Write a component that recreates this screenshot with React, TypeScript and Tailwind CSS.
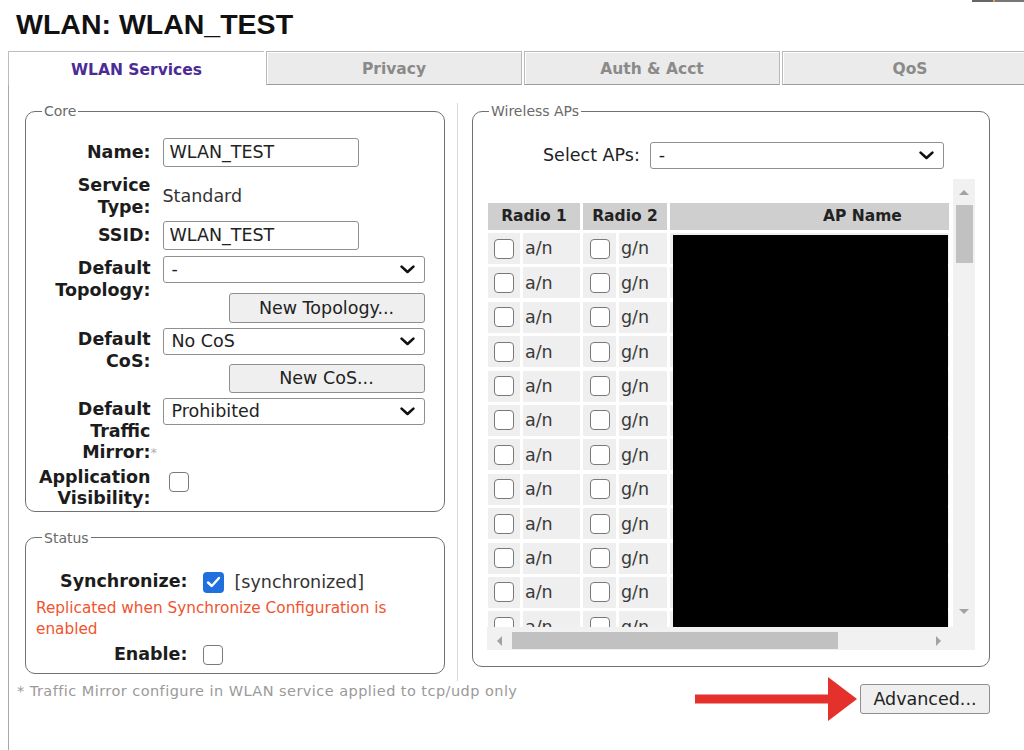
import React from "react";

const Chevron = () => (
  <svg width="15" height="9" viewBox="0 0 15 9" className="shrink-0">
    <path d="M1.6 1.6 L7.5 7 L13.4 1.6" stroke="#111" strokeWidth="2.6" fill="none" strokeLinecap="round" strokeLinejoin="round" />
  </svg>
);

const Box = () => <div className="w-[20px] h-[20px] rounded-[4px] border-[1.5px] border-[#7a7a7a] bg-white shrink-0" />;

const Checked = () => (
  <div className="w-[21px] h-[21px] rounded-[4px] bg-[#1f6fdf] flex items-center justify-center shrink-0">
    <svg width="15" height="12" viewBox="0 0 15 12">
      <path d="M2 6.5 L5.8 10 L13 2" stroke="#fff" strokeWidth="2.4" fill="none" strokeLinecap="round" strokeLinejoin="round" />
    </svg>
  </div>
);

const Lbl = ({ children, className = "" }: { children: React.ReactNode; className?: string }) => (
  <div className={`w-[114.5px] shrink-0 text-right font-bold text-[17.5px] leading-[21.5px] text-[#1c1c1c] ${className}`}>{children}</div>
);

const Input = ({ value }: { value: string }) => (
  <div className="w-[196px] h-[29px] border border-[#8f8f8f] rounded-[3px] flex items-center pl-[6px] text-[17.5px] text-[#222] bg-white">{value}</div>
);

const Select = ({ text, className = "" }: { text: string; className?: string }) => (
  <div className={`h-[27px] border border-[#8f8f8f] rounded-[3px] flex items-center justify-between pl-[8px] pr-[9px] text-[17.5px] text-[#222] bg-white ${className}`}>
    <span>{text}</span>
    <Chevron />
  </div>
);

const Btn = ({ children, className = "" }: { children: React.ReactNode; className?: string }) => (
  <div className={`bg-[#efefef] border border-[#8f8f8f] rounded-[3px] flex items-center justify-center text-[17.5px] text-[#222] ${className}`}>{children}</div>
);

const Tri = ({ dir }: { dir: "up" | "down" | "left" | "right" }) => {
  const pts = {
    up: "0,5 5,0 10,5",
    down: "0,0 10,0 5,5",
    left: "5,0 5,10 0,5",
    right: "0,0 0,10 5,5",
  }[dir];
  const horiz = dir === "left" || dir === "right";
  return (
    <svg width={horiz ? 5 : 10} height={horiz ? 10 : 5} viewBox={horiz ? "0 0 5 10" : "0 0 10 5"}>
      <polygon points={pts} fill="#a3a3a3" />
    </svg>
  );
};

export default function App() {
  const rows = Array.from({ length: 12 });
  return (
    <div className="w-[1024px] h-[750px] overflow-hidden bg-white font-['DejaVu_Sans',sans-serif] text-[#222]">
      <div className="flex justify-end h-[2px]">
        <div className="w-[21px] bg-[#666]" />
        <div className="w-[2px] bg-[#d9a35c]" />
        <div className="w-[29px] bg-[#777]" />
      </div>
      <h1 className="ml-[16px] mt-[7px] font-['Liberation_Sans',Arial,sans-serif] font-bold text-[28.5px] leading-[30px] text-[#111]">
        WLAN: WLAN_TEST
      </h1>

      <div className="mt-[12px] ml-[8px] flex h-[34px]">
        <div className="w-[256px] shrink-0 bg-white border-t border-l border-[#bdbdbd] flex items-center justify-center pt-[4px] text-[15.5px] font-bold text-[#4b2c96]">
          WLAN Services
        </div>
        {["Privacy", "Auth & Acct", "QoS"].map((t) => (
          <div
            key={t}
            className="ml-[2px] w-[256px] shrink-0 bg-[#ebebeb] border border-[#b9b9b9] border-b-[#9c9c9c] shadow-[inset_1px_1px_0_#fff] flex items-center justify-center pt-[4px] text-[15.5px] font-bold text-[#8a8a8a]"
          >
            {t}
          </div>
        ))}
      </div>

      <div className="ml-[8px] border-l border-[#a8a8a8] h-[665px]">
        <div className="flex pt-[18px] pl-[16px]">
          {/* Left column */}
          <div className="w-[420px] shrink-0 pb-[7px]">
            <fieldset className="border-[1.5px] border-[#707070] rounded-[10px] pl-[10px] pr-[16px] pt-[19px] pb-[1px] min-w-0">
              <legend className="ml-[6px] px-[2px] text-[14px] leading-[16px] text-[#6a6a6a]">Core</legend>

              <div className="flex items-center gap-[12px]">
                <Lbl>Name:</Lbl>
                <Input value="WLAN_TEST" />
              </div>

              <div className="mt-[8px] flex items-center gap-[12px]">
                <Lbl>
                  Service
                  <br />
                  Type:
                </Lbl>
                <div className="text-[17.5px] text-[#333]">Standard</div>
              </div>

              <div className="mt-[3px] flex items-center gap-[12px]">
                <Lbl>SSID:</Lbl>
                <Input value="WLAN_TEST" />
              </div>

              <div className="mt-[6px] flex items-start gap-[12px]">
                <Lbl className="mt-[2px]">
                  Default
                  <br />
                  Topology:
                </Lbl>
                <div className="w-[262px] flex flex-col items-end">
                  <Select text="-" className="w-full" />
                  <Btn className="mt-[10px] w-[196px] h-[30px]">New Topology...</Btn>
                </div>
              </div>

              <div className="mt-[5px] flex items-start gap-[12px]">
                <Lbl className="mt-[1px]">
                  Default
                  <br />
                  CoS:
                </Lbl>
                <div className="w-[262px] flex flex-col items-end">
                  <Select text="No CoS" className="w-full" />
                  <Btn className="mt-[9px] w-[196px] h-[29px]">New CoS...</Btn>
                </div>
              </div>

              <div className="mt-[5px] flex items-start gap-[12px]">
                <Lbl className="mt-[1px]">
                  Default
                  <br />
                  Traffic
                  <br />
                  Mirror:
                  <span className="inline-block w-0 text-left font-normal text-[13px] text-[#b0b0b0] align-top">*</span>
                </Lbl>
                <div className="w-[262px]">
                  <Select text="Prohibited" className="w-full" />
                </div>
              </div>

              <div className="mt-[3px] flex items-start gap-[12px]">
                <Lbl>
                  Application
                  <br />
                  Visibility:
                </Lbl>
                <div className="mt-[5px] ml-[6px]">
                  <Box />
                </div>
              </div>
            </fieldset>

            <fieldset className="mt-[18px] border-[1.5px] border-[#707070] rounded-[10px] pl-[10px] pr-[10px] pt-[23.5px] pb-[7.5px] min-w-0">
              <legend className="ml-[6px] px-[2px] text-[14px] leading-[16px] text-[#6a6a6a]">Status</legend>
              <div className="flex items-center">
                <div className="w-[151.5px] shrink-0 text-right font-bold text-[17.5px] leading-[21.5px] text-[#1c1c1c]">Synchronize:</div>
                <div className="ml-[15px]">
                  <Checked />
                </div>
                <div className="ml-[11px] text-[17.5px] text-[#333]">[synchronized]</div>
              </div>
              <div className="mt-[3px] text-[15.3px] leading-[21px] text-[#f0542e]">
                Replicated when Synchronize Configuration is enabled
              </div>
              <div className="mt-[3.5px] flex items-center">
                <div className="w-[151.5px] shrink-0 text-right font-bold text-[17.5px] leading-[21.5px] text-[#1c1c1c]">Enable:</div>
                <div className="ml-[15px]">
                  <Box />
                </div>
              </div>
            </fieldset>
          </div>

          {/* Divider */}
          <div className="ml-[12px] mr-[14px] w-px bg-[#d8d8d8] self-stretch" />

          {/* Right column */}
          <div className="w-[518px] shrink-0">
            <fieldset className="border-[1.5px] border-[#707070] rounded-[10px] pl-[14px] pr-[13px] pt-[23px] pb-[15.5px] min-w-0">
              <legend className="ml-[2px] px-[2px] text-[14px] leading-[16px] text-[#6a6a6a]">Wireless APs</legend>
              <div className="flex items-center ml-[56px]">
                <span className="text-[17.5px] text-[#222]">Select APs:</span>
                <Select text="-" className="ml-[10px] w-[294px]" />
              </div>

              <div className="mt-[10px] w-[488px] flex flex-col">
                <div className="flex h-[448px]">
                  <div className="w-[466px] overflow-hidden pl-[1px] pt-[24px]">
                    <div className="flex gap-[3px] h-[27px] text-[15.5px] font-bold text-[#222]">
                      <div className="w-[92px] shrink-0 bg-[#cfcfcf] flex items-center justify-center">Radio 1</div>
                      <div className="w-[84px] shrink-0 bg-[#cfcfcf] flex items-center justify-center">Radio 2</div>
                      <div className="w-[279px] shrink-0 bg-[#cfcfcf] flex items-center pl-[153px]">AP Name</div>
                    </div>
                    <div className="mt-[3px] flex gap-[3px]">
                      <div className="flex flex-col gap-[3.4px]">
                        {rows.map((_, i) => (
                          <div key={i} className="flex gap-[3px] h-[31px] shrink-0">
                            <div className="w-[32px] bg-[#efefef] flex items-center justify-center">
                              <Box />
                            </div>
                            <div className="w-[57px] bg-[#efefef] flex items-center pl-[2px] text-[17.5px] text-[#3a3a3a]">a/n</div>
                            <div className="w-[33px] bg-[#efefef] flex items-center justify-center">
                              <Box />
                            </div>
                            <div className="w-[48px] bg-[#efefef] flex items-center pl-[2px] text-[17.5px] text-[#3a3a3a]">g/n</div>
                          </div>
                        ))}
                      </div>
                      <div className="relative w-[279px] shrink-0 flex flex-col gap-[3.4px]">
                        {rows.map((_, i) => (
                          <div key={i} className="h-[31px] shrink-0 bg-[#efefef]" />
                        ))}
                        <div className="absolute left-[3px] right-[1px] top-[2px] bottom-0 bg-black" />
                      </div>
                    </div>
                  </div>
                  <div className="w-[22px] bg-[#f1f1f1] flex flex-col items-center">
                    <div className="h-[26px] flex items-center justify-center">
                      <Tri dir="up" />
                    </div>
                    <div className="w-[17px] h-[58px] bg-[#c1c1c1]" />
                    <div className="flex-1" />
                    <div className="h-[20px] mb-[6px] flex items-center justify-center">
                      <Tri dir="down" />
                    </div>
                  </div>
                </div>
                <div className="flex h-[23px]">
                  <div className="w-[466px] bg-[#f1f1f1] flex items-end pb-[1px]">
                    <div className="w-[25px] h-[17px] flex items-center justify-center">
                      <Tri dir="left" />
                    </div>
                    <div className="w-[326px] h-[17px] bg-[#c1c1c1]" />
                    <div className="flex-1" />
                    <div className="w-[30px] h-[17px] flex items-center justify-center">
                      <Tri dir="right" />
                    </div>
                  </div>
                  <div className="w-[22px] bg-[#f1f1f1]" />
                </div>
              </div>
            </fieldset>
          </div>
        </div>

        <div className="flex items-start mt-[2px] pl-[8px] pr-[34px]">
          <div className="text-[14.5px] leading-[16px] tracking-[0.45px] text-[#9a9a9a]">* Traffic Mirror configure in WLAN service applied to tcp/udp only</div>
          <div className="ml-auto flex items-center -mt-[6px]">
            <svg width="162" height="44" viewBox="0 0 162 44" className="mr-[3px]">
              <rect x="0" y="17.5" width="136" height="9" fill="#e5312b" />
              <polygon points="133,0 162,22 133,44" fill="#e5312b" />
            </svg>
            <Btn className="w-[130px] h-[30px]">Advanced...</Btn>
          </div>
        </div>
      </div>
    </div>
  );
}
